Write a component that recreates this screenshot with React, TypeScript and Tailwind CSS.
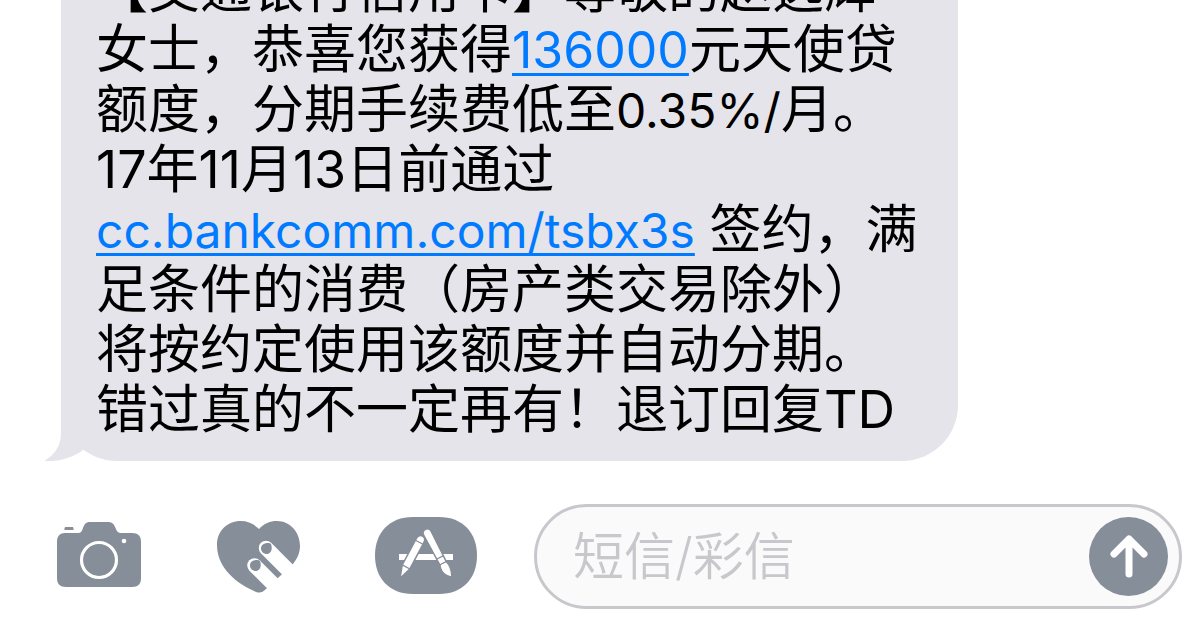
import { useState } from "react";

function CameraIcon() {
  return (
    <svg width="84" height="70" viewBox="0 0 84 70" aria-hidden="true">
      <path
        fill="#868e99"
        d="M8 11h13c3 0 4-2 5-5 1.500-4 3-6 7-6h18c4 0 6 2 7.500 6 1 3 2.500 5 5.500 5h11c6 0 9 3 9 9v36c0 6-3 9-9 9H9c-6 0-9-3-9-9V20c0-6 3-9 8-9z"
      />
      <path fill="#868e99" d="M9 5h6c1 0 1.500.5 1.500 1.500V8h-9V6.500C7.500 5.500 8 5 9 5z" />
      <circle cx="42" cy="38" r="17.500" fill="none" stroke="#fff" strokeWidth="3.200" />
      <circle cx="67" cy="19" r="2.300" fill="#fff" />
    </svg>
  );
}

function HeartIcon() {
  return (
    <svg width="84" height="72" viewBox="0 0 84 72" aria-hidden="true">
      <path
        fill="#868e99"
        d="M42 8C47 2.500 53 0 60 0c13 0 23 11 23 25 0 7-3 13-7 18L49 68c-4 4-7 4.500-12 2C15 60 0 44 0 24 0 10 10 0 24 0c7 0 13 3 18 8z"
      />
      <g fill="none" stroke="#fff" strokeWidth="14.500" strokeLinecap="round">
        <path d="M49 27 84 62" />
        <path d="M37.500 44.500 70 77" />
      </g>
      <path
        fill="#868e99"
        d="M44 27.500c0-4 3.500-5.500 7.500-5.500 2 0 3 1 3 3 1 4.500-1.500 8-4.500 8-3.500 0-6-2.500-6-5.500zM33 44.500c0-4 3.500-5.500 7.500-5.500 2 0 3 1 3 3 1 4.500-1.500 8-4.500 8-3.500 0-6-2.500-6-5.500z"
      />
    </svg>
  );
}

function AppStoreIcon() {
  return (
    <svg width="102" height="79" viewBox="0 0 102 79" aria-hidden="true">
      <path
        fill="#868e99"
        d="M38 0h26c24 0 38 16 38 38.500S88 77 64 77H38C14 77 0 61 0 38.500S14 0 38 0z"
      />
      <path fill="#fff" d="M24 37h54v6H24z" />
      <g transform="translate(47.500 19) rotate(28)">
        <path fill="#fff" stroke="#868e99" strokeWidth="1.500" d="M-4.300 5c0-6.500 8.600-6.500 8.600 0v30L0 48l-4.300-13z" />
        <path stroke="#868e99" strokeWidth="1.200" d="M-4.300 7h8.600M-4.300 35h8.600" />
      </g>
      <g transform="translate(50.500 12.500) rotate(-27.500)">
        <path
          fill="#fff"
          stroke="#868e99"
          strokeWidth="1.500"
          d="M-4.200 4c0-5.500 8.400-5.500 8.400 0l-.6 34c2 6 .5 11-2.200 16.500-4.500-3-8-9-5-16.500z"
        />
        <path stroke="#868e99" strokeWidth="1.200" d="M-4 31.500h8M-4 38h8" />
      </g>
    </svg>
  );
}

function ArrowUpIcon() {
  return (
    <svg
      width="40"
      height="46"
      viewBox="0 0 40 46"
      fill="none"
      stroke="#fff"
      strokeWidth="7"
      strokeLinecap="round"
      strokeLinejoin="round"
      aria-hidden="true"
    >
      <path d="M20 40V5M5 20 20 5l15 15" />
    </svg>
  );
}

function BubbleTail() {
  return (
    <svg
      className="absolute bottom-0 -left-4"
      width="60"
      height="60"
      viewBox="0 0 60 60"
      aria-hidden="true"
    >
      <path fill="#e5e4ea" d="M16 0v32c0 12-6 22-17 28 14 1 27-3 38-10L60 20V0z" />
    </svg>
  );
}

const linkClass =
  "leading-none text-[#007aff] underline decoration-[3px] underline-offset-[5px]";

export default function App() {
  const [draft, setDraft] = useState("");

  return (
    <div className="flex h-screen flex-col overflow-hidden bg-white font-['Inter','Noto_Sans_CJK_SC',sans-serif]">
      <main className="flex min-h-0 flex-1 flex-col justify-end overflow-hidden pr-6 pl-[61px]">
        <article
          lang="zh-CN"
          className="relative w-full max-w-[897px] shrink-0 rounded-[56px] bg-[#e5e4ea] pt-[21px] pr-6 pb-[21px] pl-[35px]"
        >
          <BubbleTail />
          <p className="relative text-[52px] leading-[60px] whitespace-nowrap text-black">
            【交通银行信用卡】尊敬的赵选辉
            <br />
            女士，恭喜您获得
            <a href="tel:136000" className={`${linkClass} text-[50px]`}>
              136000
            </a>
            元天使贷
            <br />
            额度，分期手续费低至
            <span className="text-[48px] leading-none">0.35%/</span>月。
            <br />
            17年11月13日前通过
            <br />
            <a
              href="http://cc.bankcomm.com/tsbx3s"
              className={`${linkClass} text-[48px]`}
            >
              cc.bankcomm.com/tsbx3s
            </a>{" "}
            签约，满
            <br />
            足条件的消费（房产类交易除外）
            <br />
            将按约定使用该额度并自动分期。
            <br />
            错过真的不一定再有！退订回复TD
          </p>
        </article>
      </main>

      <form
        className="mt-[43px] mb-3 flex shrink-0 items-center pr-[11px] pl-[57px]"
        onSubmit={(event) => event.preventDefault()}
      >
        <button type="button" aria-label="相机" className="mr-[76px] shrink-0">
          <CameraIcon />
        </button>
        <button type="button" aria-label="Digital Touch" className="mr-[74px] shrink-0">
          <HeartIcon />
        </button>
        <button type="button" aria-label="App Store" className="mr-[57px] shrink-0">
          <AppStoreIcon />
        </button>
        <div className="flex h-[105px] min-w-0 flex-1 items-center rounded-full border-[3px] border-[#c8c7cc] bg-[#fafafa] pr-[11px] pl-9">
          <input
            type="text"
            aria-label="短信/彩信"
            placeholder="短信/彩信"
            value={draft}
            onChange={(event) => setDraft(event.target.value)}
            className="h-full min-w-0 flex-1 bg-transparent text-[51px] font-[350] text-black outline-none placeholder:text-[#c8c7cc] placeholder:opacity-100"
          />
          <button
            type="submit"
            aria-label="发送"
            className="flex size-[79px] shrink-0 items-center justify-center rounded-full bg-[#868e99]"
          >
            <ArrowUpIcon />
          </button>
        </div>
      </form>
    </div>
  );
}
